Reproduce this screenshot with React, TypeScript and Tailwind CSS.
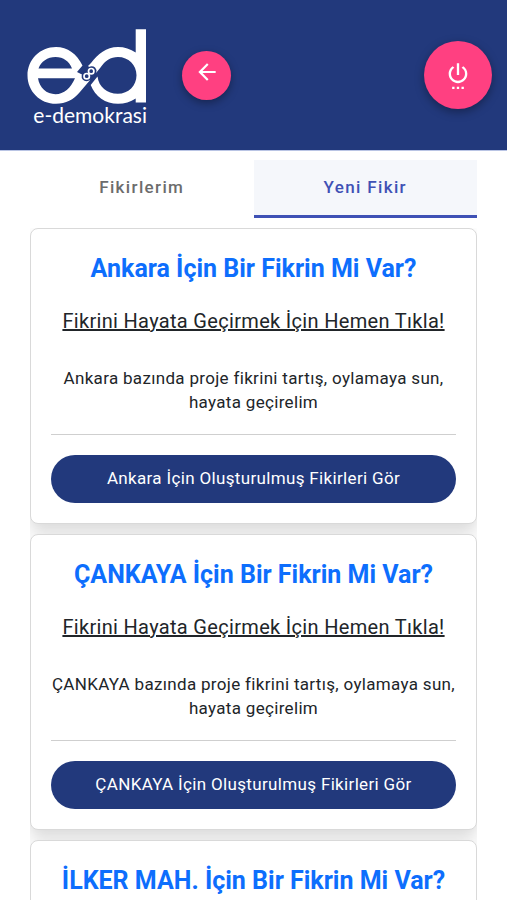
import { MdArrowBack, MdSettingsPower } from 'react-icons/md';

const BOLGELER = ['Ankara', 'ÇANKAYA', 'İLKER MAH.'];

const Logo = () => {
  return (
    <a href="#" aria-label="e-demokrasi" className="block w-[120px] shrink-0 pt-1 text-white">
      <svg viewBox="27 28 120 76" className="block w-full" aria-hidden="true">
        <path
          fill="currentColor"
          fillRule="evenodd"
          d="M82.5 64.5C77 53 67.500 46 56 46C40 46 27.500 58.700 27.500 74.400C27.500 90.100 40 102.800 56 102.800C66 102.800 73.500 98.500 79.500 91.500L91 78L77 71ZM38.500 67.500C41 60.500 47.500 56 55.500 56C63.500 56 69.500 60.500 72 67.500ZM38 77.300H75C70.500 87.500 64 93.200 55.500 93.200C46.500 93.200 39.500 87 38 77.300Z"
        />
        <path
          fill="currentColor"
          fillRule="evenodd"
          d="M135.700 28.300H146V101.500H135.700V97.500C130.500 101 124.500 102.800 118 102.800C105.500 102.800 95 95.500 90.700 84L97.500 75.500C98.800 86 107 92.800 117.800 92.800C128.500 92.800 136.500 84.800 136.500 74.300C136.500 63.800 128.500 56 118 56C110.500 56 105 60 100.500 66.500L96 72L88 65L91 62C98 53 106 46 118 46C124.500 46 130.500 48 135.700 51.500Z"
        />
        <ellipse
          cx="89"
          cy="72.700"
          rx="8.600"
          ry="6"
          transform="rotate(-45 89 72.700)"
          fill="#22397c"
        />
        <g fill="none" stroke="currentColor" strokeWidth="1.700">
          <circle cx="86.700" cy="75.200" r="2.700" />
          <circle cx="91.200" cy="70.200" r="2.700" />
        </g>
      </svg>
      <span className="block text-right font-[Lato,sans-serif] text-[21px] leading-5">
        e-demokrasi
      </span>
    </a>
  );
};

const Header = () => {
  return (
    <header className="flex h-[151px] items-center border-b border-[#b9c4e4] bg-[#22397c] pr-[15px] pl-[27px]">
      <Logo />
      <button
        type="button"
        aria-label="Geri"
        className="ml-[35px] flex size-[49px] items-start justify-center rounded-full bg-[#ff4081] pt-2 text-[26px] text-white shadow-[0_3px_8px_rgba(0,0,0,0.35)]"
      >
        <MdArrowBack />
      </button>
      <button
        type="button"
        aria-label="Çıkış"
        className="ml-auto flex size-[68px] items-center justify-center rounded-full bg-[#ff4081] text-[28px] text-white shadow-[0_3px_10px_rgba(0,0,0,0.35)]"
      >
        <MdSettingsPower />
      </button>
    </header>
  );
};

const Tabs = () => {
  return (
    <div role="tablist" className="grid grid-cols-2 text-[17px] font-medium tracking-[0.08em]">
      <button
        type="button"
        role="tab"
        aria-selected="false"
        className="h-[58px] border-b-3 border-transparent text-[#6c6c6c]"
      >
        Fikirlerim
      </button>
      <button
        type="button"
        role="tab"
        aria-selected="true"
        className="h-[58px] border-b-3 border-[#3f51b5] bg-[#f5f7fb] text-[#3f51b5]"
      >
        Yeni Fikir
      </button>
    </div>
  );
};

const FikirCard = ({ bolge }: { bolge: string }) => {
  return (
    <article className="rounded-lg border border-[#d9d9d9] bg-white p-5 text-center tracking-[0.02em] shadow-[0_8px_16px_rgba(0,0,0,0.15)]">
      <h2 className="text-[25px] leading-10 font-bold tracking-normal text-[#0d6efd]">
        {bolge} İçin Bir Fikrin Mi Var?
      </h2>
      <a href="#" className="mt-[18px] block text-xl leading-7 underline">
        Fikrini Hayata Geçirmek İçin Hemen Tıkla!
      </a>
      <p className="-mx-1 mt-[31px] px-[2px] text-[17px] leading-6">
        {bolge} bazında proje fikrini tartış, oylamaya sun, hayata geçirelim
      </p>
      <hr className="my-5 border-[#cfcfcf]" />
      <button
        type="button"
        className="h-12 w-full rounded-full bg-[#22397c] text-[17px] tracking-[0.02em] text-white"
      >
        {bolge} İçin Oluşturulmuş Fikirleri Gör
      </button>
    </article>
  );
};

export default function App() {
  return (
    <div className="min-h-screen bg-white font-[Roboto,sans-serif] text-[#212529]">
      <Header />
      <main className="px-[30px] pt-[9px]">
        <Tabs />
        <div className="mt-[10px] flex flex-col gap-[10px] overflow-hidden">
          {BOLGELER.map((bolge) => (
            <FikirCard key={bolge} bolge={bolge} />
          ))}
        </div>
      </main>
    </div>
  );
}
